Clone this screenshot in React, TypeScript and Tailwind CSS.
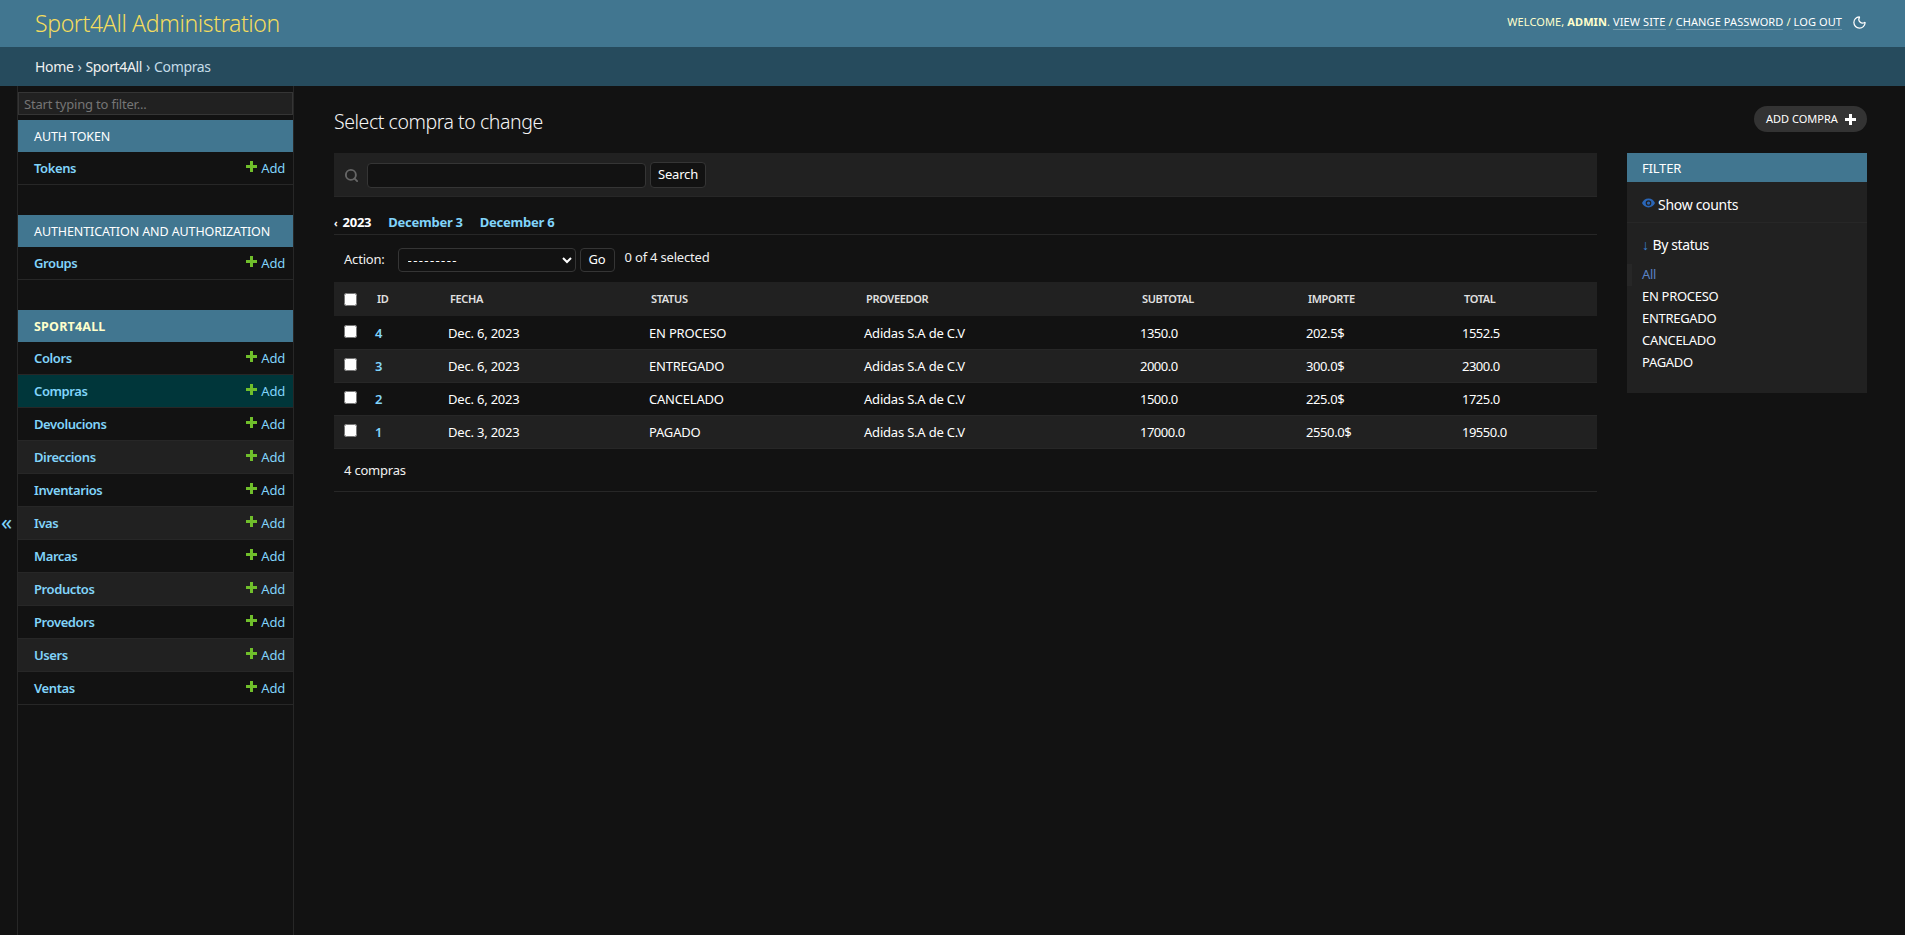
import { Moon, Search } from "lucide-react";

const sections = [
  { name: "Auth Token", models: ["Tokens"] },
  { name: "Authentication and Authorization", models: ["Groups"] },
  {
    name: "Sport4All",
    current: true,
    models: ["Colors", "Compras", "Devolucions", "Direccions", "Inventarios", "Ivas", "Marcas", "Productos", "Provedors", "Users", "Ventas"],
  },
];

const compras = [
  { id: 4, fecha: "Dec. 6, 2023", status: "EN PROCESO", subtotal: "1350.0", importe: "202.5$", total: "1552.5" },
  { id: 3, fecha: "Dec. 6, 2023", status: "ENTREGADO", subtotal: "2000.0", importe: "300.0$", total: "2300.0" },
  { id: 2, fecha: "Dec. 6, 2023", status: "CANCELADO", subtotal: "1500.0", importe: "225.0$", total: "1725.0" },
  { id: 1, fecha: "Dec. 3, 2023", status: "PAGADO", subtotal: "17000.0", importe: "2550.0$", total: "19550.0" },
];

const columns = ["ID", "Fecha", "Status", "Proveedor", "Subtotal", "Importe", "Total"];

function PlusIcon({ className }: { className?: string }) {
  return (
    <svg viewBox="0 0 11 11" className={className} fill="currentColor">
      <path d="M4 0h3v4h4v3H7v4H4V7H0V4h4z" />
    </svg>
  );
}

function ModelRow({ name, alt, selected }: { name: string; alt: boolean; selected: boolean }) {
  const bg = selected ? "bg-[#00363a]" : alt ? "bg-[#212121]" : "bg-[#121212]";
  return (
    <div className={`flex h-[33px] items-center justify-between border-b border-[#272727] pl-4 pr-[8px] pt-[2px] text-[13px] ${bg}`}>
      <a className="font-semibold tracking-[-0.4px] text-[#81d4fa]">{name}</a>
      <a className="flex items-center text-[#81d4fa]">
        <PlusIcon className="mr-[4px] -mt-[5px] h-[11px] w-[11px] text-[#70bf2b]" />
        Add
      </a>
    </div>
  );
}

export default function App() {
  return (
    <div className="flex min-h-screen flex-col bg-[#121212] font-['Noto_Sans',sans-serif] text-[13px] tracking-[-0.2px] text-white">
      {/* Header */}
      <header className="flex h-[47px] items-center justify-between bg-[#417690] pl-[35px] pr-[38px]">
        <h1 className="text-[23px] font-light tracking-[-0.35px] text-[#f5dd5d]">Sport4All Administration</h1>
        <div className="flex items-center pb-[2px] text-[11px] uppercase tracking-[0.1px] text-[#ffc]">
          <span>
            Welcome, <strong className="font-bold">admin</strong>.{" "}
            <a className="border-b border-white/25 text-white">View site</a> /{" "}
            <a className="border-b border-white/25 text-white">Change password</a> /{" "}
            <a className="border-b border-white/25 text-white">Log out</a>
          </span>
          <Moon className="ml-[10px] h-[15px] w-[15px] text-white" strokeWidth={2} />
        </div>
      </header>

      {/* Breadcrumbs */}
      <div className="flex h-[39px] items-center bg-[#264b5d] pl-[35px] text-[14px] tracking-[-0.35px] text-[#c4dce8]">
        <a className="text-[#f0f0f0]">Home</a>
        <span className="mx-1">›</span>
        <a className="text-[#f0f0f0]">Sport4All</a>
        <span className="mx-1">›</span>
        Compras
      </div>

      <div className="flex flex-1">
        {/* Sidebar toggle */}
        <button className="flex w-[18px] shrink-0 items-center justify-center border-r border-[#272727] pr-[4px] pt-[20px] text-[22px] leading-none text-[#81d4fa]">
          «
        </button>

        {/* Sidebar */}
        <nav className="w-[276px] shrink-0 border-r border-[#272727] pt-[6px]">
          <input
            placeholder="Start typing to filter..."
            className="mb-[5px] block h-[23px] w-full border border-[#353535] bg-[#212121] px-[5px] text-[13px] text-white placeholder:text-[#757575]"
          />
          <div className="flex flex-col gap-[30px]">
            {sections.map((section) => (
              <div key={section.name}>
                <div
                  className={`flex h-[32px] items-center bg-[#417690] pl-4 pt-[2px] text-[12.5px] uppercase ${
                    section.current ? "font-bold tracking-[0.2px] text-[#ffc]" : "tracking-[-0.1px] text-white"
                  }`}
                >
                  {section.name}
                </div>
                {section.models.map((m, i) => (
                  <ModelRow key={m} name={m} alt={i > 1 && i % 2 === 1} selected={m === "Compras"} />
                ))}
              </div>
            ))}
          </div>
        </nav>

        {/* Content */}
        <main className="min-w-0 flex-1 pl-[40px] pr-[38px] pt-[20px]">
          <div className="flex h-[47px] items-start justify-between">
            <h2 className="pt-[2px] text-[19.5px] font-light leading-[28px] tracking-[-0.45px] text-[#f5f5f5]">Select compra to change</h2>
            <a className="flex h-[26px] w-[113px] items-center gap-[7px] rounded-full bg-[#333333] pl-[12px] text-[11px] uppercase tracking-[0px] text-white">
              Add compra
              <PlusIcon className="h-[11px] w-[11px] text-white" />
            </a>
          </div>

          <div className="flex items-start gap-[30px]">
            <div className="min-w-0 flex-1">
              {/* Search */}
              <div className="flex h-[44px] items-center border-b border-[#272727] bg-[#212121] pl-[10px] pt-[1px]">
                <Search className="h-[15px] w-[15px] text-[#666666]" strokeWidth={3} />
                <input className="ml-[8px] h-[25px] w-[279px] rounded border border-[#353535] bg-[#121212]" />
                <button className="ml-[4px] h-[26px] w-[56px] rounded border border-[#353535] bg-[#121212] text-[13px] text-white">
                  Search
                </button>
              </div>

              {/* Date hierarchy */}
              <div className="flex h-[38px] items-center gap-[17px] border-b border-[#272727] pt-[14px] text-[13px] font-bold tracking-[-0.25px]">
                <span className="text-white">
                  <span className="mr-[2px] text-[10px]">‹</span> 2023
                </span>
                <a className="text-[#81d4fa]">December 3</a>
                <a className="text-[#81d4fa]">December 6</a>
              </div>

              {/* Actions */}
              <div className="flex h-[47px] items-center pl-[10px] pt-[3px] text-[13px] text-[#f0f0f0]">
                <label>Action:</label>
                <select className="ml-[13px] h-[24px] w-[178px] rounded border border-[#353535] bg-[#121212] pl-[5px] text-[13px] tracking-[1.4px] text-white [color-scheme:dark]">
                  <option>---------</option>
                </select>
                <button className="ml-[4px] h-[24px] w-[35px] rounded border border-[#353535] bg-[#121212] text-white">
                  Go
                </button>
                <span className="ml-[10px] -mt-[4px]">0 of 4 selected</span>
              </div>

              {/* Results */}
              <table className="w-full table-fixed border-collapse">
                <colgroup>
                  <col className="w-[33px]" />
                  <col className="w-[73px]" />
                  <col className="w-[201px]" />
                  <col className="w-[215px]" />
                  <col className="w-[276px]" />
                  <col className="w-[166px]" />
                  <col className="w-[156px]" />
                  <col />
                </colgroup>
                <thead>
                  <tr className="h-[34px] bg-[#212121]">
                    <th className="pl-[10px] text-left align-middle">
                      <input type="checkbox" className="block h-[13px] w-[13px]" />
                    </th>
                    {columns.map((c) => (
                      <th key={c} className="pl-[10px] text-left text-[11px] font-semibold uppercase tracking-[-0.35px] text-[#e0e0e0]">
                        {c}
                      </th>
                    ))}
                    <th />
                  </tr>
                </thead>
                <tbody>
                  {compras.map((c, i) => (
                    <tr key={c.id} className={`h-[33px] border-b border-[#272727] ${i % 2 === 1 ? "bg-[#212121]" : "bg-[#121212]"}`}>
                      <td className="pl-[10px]">
                        <input type="checkbox" className="mb-[2px] block h-[13px] w-[13px]" />
                      </td>
                      <td className="pl-2 pt-[2px] font-semibold text-[#81d4fa]">
                        <a>{c.id}</a>
                      </td>
                      <td className="pl-2 pt-[2px]">{c.fecha}</td>
                      <td className="pl-2 pt-[2px]">{c.status}</td>
                      <td className="pl-2 pt-[2px]">Adidas S.A de C.V</td>
                      <td className="pl-2 pt-[2px] tracking-[-0.5px]">{c.subtotal}</td>
                      <td className="pl-2 pt-[2px] tracking-[-0.4px]">{c.importe}</td>
                      <td className="pl-2 pt-[2px] tracking-[-0.5px]">{c.total}</td>
                      <td />
                    </tr>
                  ))}
                </tbody>
              </table>
              <p className="flex h-[43px] items-center border-b border-[#272727] pl-[10px] pt-[2px] text-[13px] text-[#f0f0f0]">4 compras</p>
            </div>

            {/* Filter */}
            <aside className="h-[240px] w-[240px] shrink-0 bg-[#212121]">
              <div className="flex h-[29px] items-center bg-[#417690] pl-[15px] pt-[2px] text-[13px] uppercase text-white">Filter</div>
              <div className="flex h-[41px] items-center border-b border-[#272727] pl-[15px] pt-[4px] text-[14px] tracking-[-0.3px]">
                <svg viewBox="0 0 16 11" className="mb-[3px] mr-[3px] h-[10px] w-[13px] text-[#2a66b8]" fill="currentColor">
                  <path d="M8 0C4 0 1.400 2.600 0 5.500 1.400 8.400 4 11 8 11s6.600-2.600 8-5.500C14.600 2.600 12 0 8 0zm0 9a3.500 3.500 0 110-7 3.500 3.500 0 010 7z" />
                  <circle cx="8" cy="5.500" r="2" />
                </svg>
                Show counts
              </div>
              <div className="flex items-center pl-[15px] pt-[11px] text-[14px] tracking-[-0.4px]">
                <span className="mr-[4px] font-bold text-[#3b82d6]">↓</span>
                By status
              </div>
              <ul className="mt-[9px] text-[13px] tracking-[-0.3px]">
                <li className="flex h-[22px] items-center border-l-[5px] border-[#272727] pl-[10px] text-[#5a82c4]">All</li>
                <li className="flex h-[22px] items-center pl-[15px]">EN PROCESO</li>
                <li className="flex h-[22px] items-center pl-[15px]">ENTREGADO</li>
                <li className="flex h-[22px] items-center pl-[15px]">CANCELADO</li>
                <li className="flex h-[22px] items-center pl-[15px]">PAGADO</li>
              </ul>
            </aside>
          </div>
        </main>
      </div>
    </div>
  );
}
